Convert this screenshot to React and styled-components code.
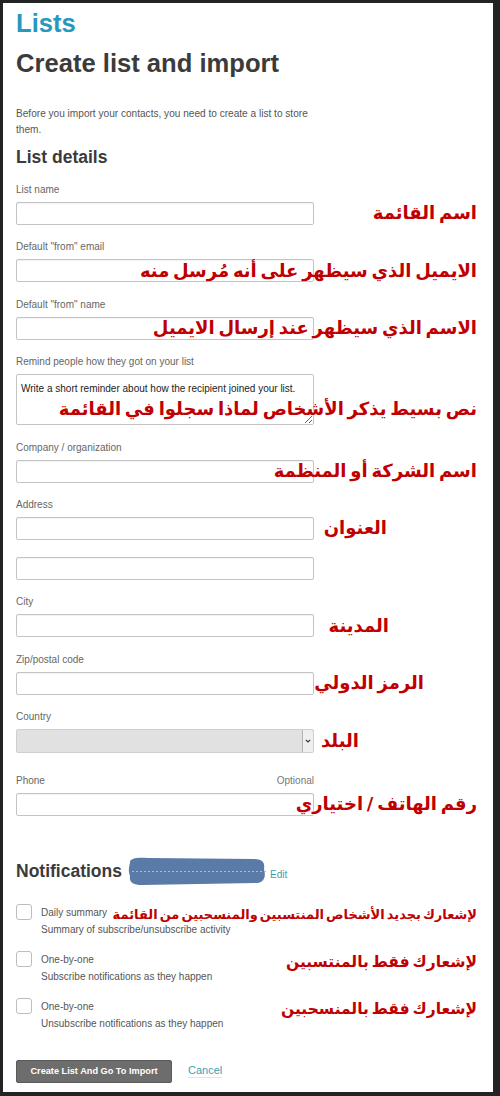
import styled, { createGlobalStyle } from "styled-components";

const GlobalStyle = createGlobalStyle`
  html, body {
    margin: 0;
    padding: 0;
    background: #232323;
  }
  * {
    box-sizing: border-box;
  }
`;

const Frame = styled.div`
  width: 500px;
  height: 1096px;
  padding: 3px 7px 4px 3px;
  background: #232323;
  display: flex;
`;

const Sheet = styled.div`
  flex: 1;
  background: #ffffff;
  padding: 5px 16px 0 13px;
  display: flex;
  flex-direction: column;
  font-family: "Liberation Sans", Arial, sans-serif;
`;

const AppName = styled.h2`
  margin: 0;
  font-size: 25.6px;
  line-height: 30px;
  font-weight: 700;
  color: #2898bd;
`;

const PageTitle = styled.h1`
  margin: 10px 0 0 0;
  font-size: 25.6px;
  line-height: 30px;
  font-weight: 700;
  color: #3b3b3b;
`;

const Intro = styled.p`
  margin: 28px 0 0 0;
  width: 300px;
  font-size: 10.1px;
  line-height: 16px;
  color: #555;
`;

const SectionTitle = styled.h3`
  margin: ${(props) => props.$top || 0}px 0 0 0;
  font-size: 17.5px;
  line-height: 20px;
  font-weight: 700;
  color: #3b3b3b;
`;

const Form = styled.div`
  margin-top: 16.5px;
  display: flex;
  flex-direction: column;
  gap: 16.5px;
`;

const Field = styled.div`
  display: flex;
  flex-direction: column;
  gap: 6px;
  margin-top: ${(props) => props.$extra || 0}px;
`;

const LabelRow = styled.div`
  width: 298px;
  display: flex;
  justify-content: space-between;
  font-size: 10px;
  line-height: 12px;
  color: #666;
`;

const Optional = styled.span`
  color: #777;
`;

const Stack = styled.div`
  display: grid;
  grid-template-areas: "stack";

  > * {
    grid-area: stack;
  }
`;

const TextInput = styled.input`
  justify-self: start;
  width: 298px;
  height: 23px;
  margin: 0;
  padding: 0 6px;
  border: 1px solid #c4c4c4;
  border-radius: 2px;
  background: #fff;
  box-shadow: inset 0 1px 1px rgba(0, 0, 0, 0.05);
  font-family: inherit;
  font-size: 11px;
  outline: none;
`;

const TextArea = styled.textarea`
  justify-self: start;
  width: 298px;
  height: 51px;
  margin: 0;
  padding: 7px 4px;
  border: 1px solid #c4c4c4;
  border-radius: 2px;
  background: #fff;
  font-family: inherit;
  font-size: 10px;
  line-height: 13px;
  color: #222;
  outline: none;
`;

const SelectBox = styled.div`
  justify-self: start;
  width: 298px;
  height: 24px;
  display: flex;
  justify-content: flex-end;
  border: 1px solid #cfcfcf;
  border-radius: 2px;
  background: #e1e1e1;
`;

const SelectArrow = styled.span`
  width: 11px;
  display: flex;
  align-items: center;
  justify-content: center;
  background: #efefef;
  border-left: 1px solid #b5b5b5;
  border-radius: 0 2px 2px 0;
`;

const Note = styled.span`
  justify-self: end;
  align-self: ${(props) => props.$align || "center"};
  padding-top: ${(props) => props.$shift || 0}px;
  direction: rtl;
  white-space: nowrap;
  font-family: "DejaVu Sans", sans-serif;
  font-weight: 700;
  font-size: ${(props) => props.$size || 18}px;
  word-spacing: -2.5px;
  line-height: 22px;
  color: #c00000;
  text-shadow: 0 0 2px #fff;
`;

const NotifyHeader = styled.div`
  margin-top: 40px;
  height: 30px;
  display: flex;
  align-items: center;
`;

const Blot = styled.svg`
  margin-left: 4px;
  flex-shrink: 0;
`;

const EditLink = styled.a`
  margin: 9px 0 0 2px;
  font-size: 10px;
  line-height: 12px;
  color: #3a9fb5;
  text-decoration: none;
`;

const Options = styled.div`
  margin-top: 18px;
  display: flex;
  flex-direction: column;
  gap: 13px;
`;

const CheckRow = styled.div`
  display: flex;
  align-items: flex-start;
  gap: 9px;
`;

const CheckBox = styled.span`
  width: 16px;
  height: 16px;
  border: 1px solid #bdbdbd;
  border-radius: 3px;
  background: #fff;
  flex-shrink: 0;
`;

const CheckText = styled.div`
  display: flex;
  flex-direction: column;
  font-size: 10px;
  line-height: 17px;
  color: #555;
`;

const Actions = styled.div`
  margin-top: 28px;
  display: flex;
  align-items: center;
  gap: 16px;
`;

const PrimaryButton = styled.button`
  width: 156px;
  height: 23px;
  padding: 0;
  border: 1px solid #5a5a5a;
  border-radius: 2px;
  background: #6d6d6d;
  color: #fff;
  font-family: inherit;
  font-size: 9.2px;
  font-weight: 700;
`;

const CancelLink = styled.a`
  font-size: 11px;
  line-height: 13px;
  color: #3a9fb5;
  text-decoration: none;
  border-bottom: 1px solid #d6ecf1;
`;

const fields = [
  { label: "List name", note: "اسم القائمة" },
  { label: "Default \"from\" email", note: "الايميل الذي سيظهر على أنه مُرسل منه" },
  { label: "Default \"from\" name", note: "الاسم الذي سيظهر عند إرسال الايميل" },
];

const options = [
  {
    title: "Daily summary",
    text: "Summary of subscribe/unsubscribe activity",
    note: "لإشعارك بجديد الأشخاص المنتسبين والمنسحبين من القائمة",
    size: 13,
  },
  {
    title: "One-by-one",
    text: "Subscribe notifications as they happen",
    note: "لإشعارك فقط بالمنتسبين",
    size: 15.5,
  },
  {
    title: "One-by-one",
    text: "Unsubscribe notifications as they happen",
    note: "لإشعارك فقط بالمنسحبين",
    size: 15.5,
  },
];

const App = () => {
  return (
    <>
      <GlobalStyle />
      <Frame>
        <Sheet>
          <AppName>Lists</AppName>
          <PageTitle>Create list and import</PageTitle>
          <Intro>
            Before you import your contacts, you need to create a list to store
            them.
          </Intro>
          <SectionTitle $top={9}>List details</SectionTitle>

          <Form>
            {fields.map((f) => (
              <Field key={f.label}>
                <LabelRow>{f.label}</LabelRow>
                <Stack>
                  <TextInput type="text" />
                  <Note>{f.note}</Note>
                </Stack>
              </Field>
            ))}

            <Field>
              <LabelRow>Remind people how they got on your list</LabelRow>
              <Stack>
                <TextArea defaultValue="Write a short reminder about how the recipient joined your list." />
                <Note $shift={18}>نص بسيط يذكر الأشخاص لماذا سجلوا في القائمة</Note>
              </Stack>
            </Field>

            <Field>
              <LabelRow>Company / organization</LabelRow>
              <Stack>
                <TextInput type="text" />
                <Note>اسم الشركة أو المنظمة</Note>
              </Stack>
            </Field>

            <Field>
              <LabelRow>Address</LabelRow>
              <Stack>
                <TextInput type="text" />
                <Note $align="start" style={{ marginRight: 90 }}>العنوان</Note>
              </Stack>
            </Field>

            <Stack>
              <TextInput type="text" />
            </Stack>

            <Field>
              <LabelRow>City</LabelRow>
              <Stack>
                <TextInput type="text" />
                <Note style={{ marginRight: 88 }}>المدينة</Note>
              </Stack>
            </Field>

            <Field>
              <LabelRow>Zip/postal code</LabelRow>
              <Stack>
                <TextInput type="text" />
                <Note style={{ marginRight: 53 }}>الرمز الدولي</Note>
              </Stack>
            </Field>

            <Field>
              <LabelRow>Country</LabelRow>
              <Stack>
                <SelectBox>
                  <SelectArrow>
                    <svg width="6" height="4" viewBox="0 0 6 4">
                      <path d="M0.8 0.8 L3 3 L5.2 0.8" fill="none" stroke="#333" strokeWidth="1.1" />
                    </svg>
                  </SelectArrow>
                </SelectBox>
                <Note style={{ marginRight: 118 }}>البلد</Note>
              </Stack>
            </Field>

            <Field $extra={5}>
              <LabelRow>
                <span>Phone</span>
                <Optional>Optional</Optional>
              </LabelRow>
              <Stack>
                <TextInput type="text" />
                <Note>رقم الهاتف / اختياري</Note>
              </Stack>
            </Field>
          </Form>

          <NotifyHeader>
            <SectionTitle>Notifications</SectionTitle>
            <Blot width="142" height="30" viewBox="0 0 142 30">
              <path
                d="M4 7 C 3 2, 12 1, 22 2 L 128 3 C 137 3, 139 7, 138 13 C 140 20, 139 27, 129 27 L 16 29 C 7 29, 3 26, 4 20 C 2 15, 3 11, 4 7 Z"
                fill="#5a7aa8"
              />
              <path d="M6 15.5 L 142 15.5" fill="none" stroke="#a9bcd6" strokeWidth="1" strokeDasharray="2 2" />
            </Blot>
            <EditLink href="#">Edit</EditLink>
          </NotifyHeader>

          <Options>
            {options.map((o) => (
              <Stack key={o.note}>
                <CheckRow>
                  <CheckBox />
                  <CheckText>
                    <span>{o.title}</span>
                    <span>{o.text}</span>
                  </CheckText>
                </CheckRow>
                <Note $align="start" $size={o.size}>{o.note}</Note>
              </Stack>
            ))}
          </Options>

          <Actions>
            <PrimaryButton>Create List And Go To Import</PrimaryButton>
            <CancelLink href="#">Cancel</CancelLink>
          </Actions>
        </Sheet>
      </Frame>
    </>
  );
};

export default App;
